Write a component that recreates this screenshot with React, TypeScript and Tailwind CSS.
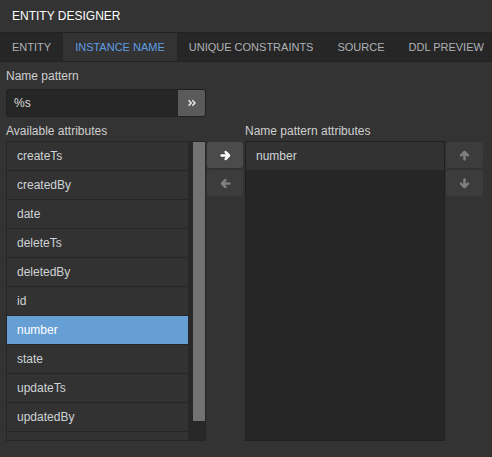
import type { ReactElement, ReactNode } from 'react';
import { FaAngleDoubleRight } from 'react-icons/fa';

const TABS = ['Entity', 'Instance name', 'Unique constraints', 'Source', 'DDL preview'];
const ACTIVE_TAB = 'Instance name';

// The last row only peeks in under the visible area, so it carries no label.
const AVAILABLE = [
  'createTs',
  'createdBy',
  'date',
  'deleteTs',
  'deletedBy',
  'id',
  'number',
  'state',
  'updateTs',
  'updatedBy',
  '',
];
const SELECTED = 'number';

const PATTERN_ATTRIBUTES = ['number'];

const ROTATION = { right: 'rotate-0', down: 'rotate-90', left: 'rotate-180', up: '-rotate-90' };

/** Bold arrow with a rounded head, the old icon-font kind. */
function Arrow({ dir }: { dir: keyof typeof ROTATION }): ReactElement {
  return (
    <svg viewBox="0 0 12 12" className={`h-[11px] w-[11px] ${ROTATION[dir]}`} aria-hidden>
      <path
        d="M1.8 6 H9.6 M6.2 2.2 L9.8 6 L6.2 9.8"
        fill="none"
        stroke="currentColor"
        strokeWidth="2.8"
        strokeLinecap="round"
        strokeLinejoin="round"
      />
    </svg>
  );
}

function SideButton({ enabled, children }: { enabled: boolean; children: ReactNode }): ReactElement {
  return (
    <button
      type="button"
      className={
        enabled
          ? 'flex h-[26px] w-full items-center justify-center rounded-[3px] bg-[#4b4b4b] text-white'
          : 'flex h-[26px] w-full items-center justify-center rounded-[3px] bg-[#3c3c3c] text-[#7f7f7f]'
      }
    >
      {children}
    </button>
  );
}

export default function App(): ReactElement {
  return (
    <div className="flex h-[457px] w-[492px] flex-col overflow-hidden bg-[#333333] font-['Liberation_Sans',Arial,sans-serif]">
      {/* title bar */}
      <div className="flex h-[32px] items-center px-3 text-[12px] text-white">ENTITY DESIGNER</div>

      {/* tabs */}
      <div className="flex h-[30px] border-y border-[#222222] bg-[#262626]">
        {TABS.map((tab) => (
          <div
            key={tab}
            className={
              tab === ACTIVE_TAB
                ? 'flex items-center whitespace-nowrap bg-[#333333] px-3 text-[11px] uppercase text-[#5e9de2]'
                : 'flex items-center whitespace-nowrap px-3 text-[11px] uppercase text-[#aeb2b6]'
            }
          >
            {tab}
          </div>
        ))}
      </div>

      <div className="flex flex-col px-[6px]">
        <div className="mt-[7px] text-[12px] leading-[14px] text-[#cfcfcf]">Name pattern</div>
        <div className="mt-[6px] flex h-[28px] w-[200px] overflow-hidden rounded-[3px] border border-[#1f1f1f] bg-[#262626]">
          <div className="flex flex-1 items-center pl-[7px] text-[12px] text-[#dddddd]">%s</div>
          <button
            type="button"
            className="flex w-[27px] items-center justify-center bg-[#5a5a5a] text-[10px] text-[#dfe6f0]"
          >
            <FaAngleDoubleRight />
          </button>
        </div>

        <div className="mt-[7px] flex text-[12px] leading-[14px] text-[#cfcfcf]">
          <div className="w-[239px]">Available attributes</div>
          <div>Name pattern attributes</div>
        </div>

        <div className="mt-[3px] flex h-[300px]">
          {/* available attributes */}
          <div className="flex w-[200px] border border-[#262626]">
            <div className="flex flex-1 flex-col overflow-hidden">
              {AVAILABLE.map((name, index) => (
                <div
                  key={`${name}-${index}`}
                  className={
                    name === SELECTED
                      ? 'flex h-[29px] shrink-0 items-center border-b border-[#262626] bg-[#659fd4] pl-[10px] text-[12px] text-white'
                      : 'flex h-[29px] shrink-0 items-center border-b border-[#262626] bg-[#323232] pl-[10px] text-[12px] text-[#cfd3d6]'
                  }
                >
                  {name}
                </div>
              ))}
            </div>
            <div className="flex w-[17px] justify-end bg-[#282828]">
              <div className="h-[279px] w-[12px] bg-[#727272]" />
            </div>
          </div>

          <div className="ml-px mt-px flex w-[36px] flex-col gap-[2px]">
            <SideButton enabled>
              <Arrow dir="right" />
            </SideButton>
            <SideButton enabled={false}>
              <Arrow dir="left" />
            </SideButton>
          </div>

          {/* name pattern attributes */}
          <div className="ml-[2px] flex w-[200px] flex-col border border-[#1f1f1f] bg-[#262626]">
            {PATTERN_ATTRIBUTES.map((name) => (
              <div
                key={name}
                className="flex h-[29px] items-center border-b border-[#262626] bg-[#323232] pl-[10px] text-[12px] text-[#cfd3d6]"
              >
                {name}
              </div>
            ))}
          </div>

          <div className="ml-px mt-px flex w-[37px] flex-col gap-[2px]">
            <SideButton enabled={false}>
              <Arrow dir="up" />
            </SideButton>
            <SideButton enabled={false}>
              <Arrow dir="down" />
            </SideButton>
          </div>
        </div>
      </div>
    </div>
  );
}
